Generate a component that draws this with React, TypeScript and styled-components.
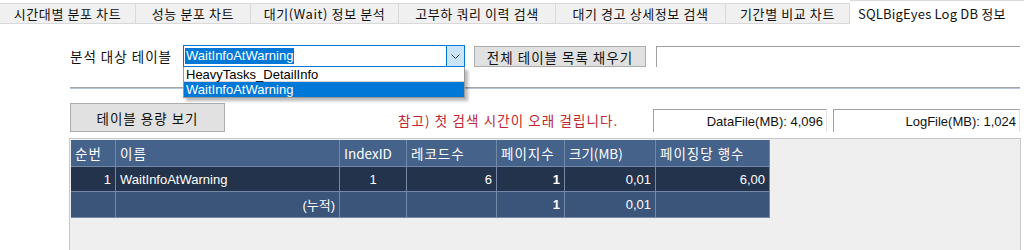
import React from "react";
import styled, { createGlobalStyle, css } from "styled-components";

const Global = createGlobalStyle`
  html, body { margin: 0; padding: 0; background: #ffffff; }
  body {
    width: 1024px; height: 250px; overflow: hidden;
    font-family: "Liberation Sans", "Noto Sans CJK KR", sans-serif;
    font-size: 12px; color: #000;
  }
`;

const KR = `"Noto Sans CJK KR", "Liberation Sans", sans-serif`;

const Root = styled.div`
  width: 1024px;
  height: 250px;
  overflow: hidden;
  background: #fff;
`;

const TabStrip = styled.div`
  display: flex;
  align-items: flex-end;
  height: 25px;
  border-bottom: 1px solid #ffffff;
`;

const Tab = styled.div<{ $w: number; $active?: boolean }>`
  flex: 0 0 ${(p) => p.$w}px;
  height: 21px;
  margin-bottom: 1px;
  display: flex;
  align-items: center;
  justify-content: center;
  box-sizing: border-box;
  background: #f0f0f0;
  border: 1px solid #d9d9d9;
  border-left: none;
  font-family: ${KR};
  font-size: 13px;
  letter-spacing: 0.6px;
  color: #111;
  white-space: nowrap;
  ${(p) =>
    p.$active &&
    css`
      height: 25px;
      margin-bottom: 0;
      background: #ffffff;
      border-bottom: none;
      justify-content: flex-start;
      padding-left: 8px;
      letter-spacing: 0.2px;
    `}
`;

const Page = styled.div`
  padding: 19px 4px 0 70px;
`;

const TopRow = styled.div`
  display: flex;
  align-items: flex-start;
  height: 22px;
`;

const Label = styled.div`
  flex: 0 0 113px;
  height: 22px;
  line-height: 22px;
  font-family: ${KR};
  font-size: 13.5px;
  letter-spacing: 1px;
  color: #111;
`;

const ComboWrap = styled.div`
  position: relative;
  flex: 0 0 282px;
  height: 22px;
`;

const ComboBox = styled.div`
  box-sizing: border-box;
  height: 22px;
  border: 1px solid #0078d7;
  background: #fff;
  display: flex;
  align-items: center;
`;

const Highlight = styled.span`
  margin-left: 1px;
  height: 16px;
  line-height: 16px;
  padding: 0 1px;
  background: #0078d7;
  color: #fff;
  font-size: 13px;
`;

const DropBtn = styled.div`
  margin-left: auto;
  width: 17px;
  height: 20px;
  background: #cce4f7;
  border-left: 1px solid #0078d7;
  display: flex;
  align-items: center;
  justify-content: center;
`;

const DropList = styled.div`
  position: absolute;
  left: 0;
  top: 22px;
  width: 282px;
  box-sizing: border-box;
  border: 1px solid #9a9a9a;
  border-top: none;
  background: #fff;
  box-shadow: 3px 3px 3px rgba(0, 0, 0, 0.28);
  z-index: 5;
`;

const ListItem = styled.div<{ $sel?: boolean }>`
  height: 15px;
  line-height: 15px;
  padding-left: 2px;
  font-size: 13px;
  color: ${(p) => (p.$sel ? "#fff" : "#000")};
  background: ${(p) => (p.$sel ? "#0078d7" : "#fff")};
  box-sizing: border-box;
  ${(p) => !p.$sel && css`border-bottom: 1px solid #d4d4d4;`}
`;

const Button = styled.div<{ $w: number; $h: number }>`
  flex: 0 0 ${(p) => p.$w}px;
  height: ${(p) => p.$h}px;
  box-sizing: border-box;
  background: #e1e1e1;
  border: 1px solid #adadad;
  display: flex;
  align-items: center;
  justify-content: center;
  font-family: ${KR};
  font-size: 13.5px;
  letter-spacing: 1px;
  color: #111;
`;

const FillButton = styled(Button)`
  margin: 1px 0 0 9px;
`;

const ViewButton = styled(Button)`
  align-self: flex-start;
`;

const TextBox = styled.div`
  flex: 1;
  margin: 1px 0 0 10px;
  height: 21px;
  box-sizing: border-box;
  border-top: 1px solid #a0a0a0;
  border-left: 1px solid #a0a0a0;
  background: #fff;
`;

const Separator = styled.div`
  margin-top: 20px;
  height: 1px;
  border-top: 1px solid #a4a4a4;
  background: #b5c6dc;
`;

const SecondRow = styled.div`
  margin-top: 14px;
  display: flex;
  align-items: flex-end;
  height: 29px;
`;

const Note = styled.div`
  flex: 1;
  padding-left: 173px;
  height: 23px;
  line-height: 23px;
  font-family: ${KR};
  font-size: 13.5px;
  letter-spacing: 1.1px;
  color: #c0262d;
  white-space: nowrap;
`;

const InfoBox = styled.div<{ $w: number }>`
  flex: 0 0 ${(p) => p.$w}px;
  height: 23px;
  box-sizing: border-box;
  border-top: 1px solid #a0a0a0;
  border-left: 1px solid #a0a0a0;
  border-right: 1px solid #e3e3e3;
  display: flex;
  align-items: center;
  justify-content: flex-end;
  padding-right: 3px;
  font-size: 13px;
  color: #111;
  & + & {
    margin-left: 6px;
  }
`;

const GridPanel = styled.div`
  margin: 6px 0 0 -1px;
  width: 952px;
  height: 120px;
  box-sizing: border-box;
  border: 1px solid #c8c8c8;
  border-bottom: none;
  background: #efefef;
  padding: 1px;
`;

const Grid = styled.div`
  display: grid;
  grid-template-columns: 45px 224px 67px 90px 68px 91px 114px;
  grid-template-rows: 27px 25px 26px;
  width: 699px;
`;

type Kind = "head" | "sel" | "sum";

const Cell = styled.div<{
  $kind: Kind;
  $align?: "left" | "right" | "center";
  $bold?: boolean;
  $latin?: boolean;
}>`
  box-sizing: border-box;
  border-right: 1px solid #7489a8;
  border-bottom: 1px solid #7489a8;
  display: flex;
  align-items: center;
  padding: 0 4px;
  color: #fff;
  white-space: nowrap;
  overflow: hidden;
  font-size: 13px;
  font-weight: ${(p) => (p.$bold ? 700 : 400)};
  justify-content: ${(p) =>
    p.$align === "right" ? "flex-end" : p.$align === "center" ? "center" : "flex-start"};
  background: ${(p) =>
    p.$kind === "head" ? "#45628b" : p.$kind === "sel" ? "#24334c" : "#3b5479"};
  ${(p) =>
    p.$kind === "head" &&
    css`
      font-family: ${KR};
      font-size: 13.5px;
      letter-spacing: ${p.$latin ? "0px" : "1px"};
    `}
`;

const Chevron = () => (
  <svg width="9" height="5" viewBox="0 0 9 5">
    <path d="M0.5 0.5 L4.5 4.5 L8.5 0.5" fill="none" stroke="#444" strokeWidth="1" />
  </svg>
);

const tabs: { t: string; w: number; active?: boolean }[] = [
  { t: "시간대별 분포 차트", w: 136 },
  { t: "성능 분포 차트", w: 115 },
  { t: "대기(Wait) 정보 분석", w: 148 },
  { t: "고부하 쿼리 이력 검색", w: 157 },
  { t: "대기 경고 상세정보 검색", w: 170 },
  { t: "기간별 비교 차트", w: 124 },
  { t: "SQLBigEyes Log DB 정보", w: 180, active: true },
];

const headers: { t: string; latin?: boolean }[] = [
  { t: "순번" },
  { t: "이름" },
  { t: "IndexID", latin: true },
  { t: "레코드수" },
  { t: "페이지수" },
  { t: "크기(MB)", latin: true },
  { t: "페이징당 행수" },
];

export default function App() {
  return (
    <Root>
      <Global />
      <TabStrip>
        {tabs.map((t) => (
          <Tab key={t.t} $w={t.w} $active={t.active}>
            {t.t}
          </Tab>
        ))}
      </TabStrip>
      <Page>
        <TopRow>
          <Label>분석 대상 테이블</Label>
          <ComboWrap>
            <ComboBox>
              <Highlight>WaitInfoAtWarning</Highlight>
              <DropBtn>
                <Chevron />
              </DropBtn>
            </ComboBox>
            <DropList>
              <ListItem>HeavyTasks_DetailInfo</ListItem>
              <ListItem $sel>WaitInfoAtWarning</ListItem>
            </DropList>
          </ComboWrap>
          <FillButton $w={172} $h={21}>전체 테이블 목록 채우기</FillButton>
          <TextBox />
        </TopRow>
        <Separator />
        <SecondRow>
          <ViewButton $w={155} $h={29}>테이블 용량 보기</ViewButton>
          <Note>참고) 첫 검색 시간이 오래 걸립니다.</Note>
          <InfoBox $w={174}>DataFile(MB): 4,096</InfoBox>
          <InfoBox $w={187}>LogFile(MB): 1,024</InfoBox>
        </SecondRow>
        <GridPanel>
          <Grid>
            {headers.map((h) => (
              <Cell key={h.t} $kind="head" $latin={h.latin}>{h.t}</Cell>
            ))}
            <Cell $kind="sel" $align="right">1</Cell>
            <Cell $kind="sel">WaitInfoAtWarning</Cell>
            <Cell $kind="sel" $align="center">1</Cell>
            <Cell $kind="sel" $align="right">6</Cell>
            <Cell $kind="sel" $align="right" $bold>1</Cell>
            <Cell $kind="sel" $align="right">0,01</Cell>
            <Cell $kind="sel" $align="right">6,00</Cell>
            <Cell $kind="sum" />
            <Cell $kind="sum" $align="right">(누적)</Cell>
            <Cell $kind="sum" />
            <Cell $kind="sum" />
            <Cell $kind="sum" $align="right" $bold>1</Cell>
            <Cell $kind="sum" $align="right">0,01</Cell>
            <Cell $kind="sum" />
          </Grid>
        </GridPanel>
      </Page>
    </Root>
  );
}
